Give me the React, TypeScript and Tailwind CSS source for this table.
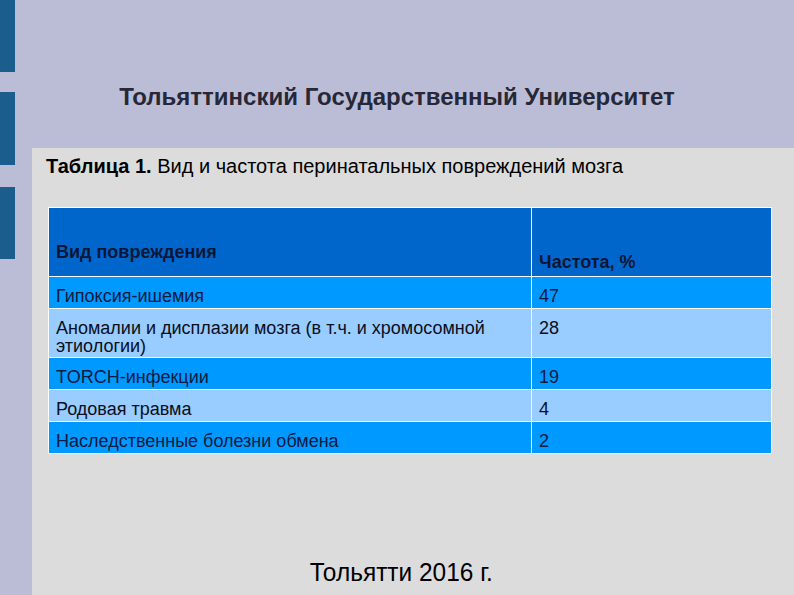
import React from "react";

const rows: { name: React.ReactNode; value: string; tall?: boolean; light: boolean }[] = [
  { name: "Гипоксия-ишемия", value: "47", light: false },
  {
    name: (
      <>
        Аномалии и дисплазии мозга (в т.ч. и хромосомной
        <br />
        этиологии)
      </>
    ),
    value: "28",
    tall: true,
    light: true,
  },
  { name: "TORCH-инфекции", value: "19", light: false },
  { name: "Родовая травма", value: "4", light: true },
  { name: "Наследственные болезни обмена", value: "2", light: false },
];

export default function App() {
  return (
    <div
      className="flex h-[595px] w-[794px] overflow-hidden bg-[#bbbdd7]"
      style={{ fontFamily: '"Liberation Sans", Arial, sans-serif' }}
    >
      {/* left decorative bars */}
      <div className="flex w-[32px] shrink-0 flex-col">
        <div className="h-[72px] w-[15px] bg-[#1b5d8d]" />
        <div className="mt-[20px] h-[73px] w-[15px] bg-[#1b5d8d]" />
        <div className="mt-[22px] h-[72px] w-[15px] bg-[#1b5d8d]" />
      </div>

      <div className="flex flex-1 flex-col">
        <div className="flex h-[148px] items-center justify-center pr-[32px] pt-[46px]">
          <h1 className="text-[24px] font-bold text-[#262838]">
            Тольяттинский Государственный Университет
          </h1>
        </div>

        <div className="flex flex-1 flex-col bg-[#dcdcdc] pl-[14px]">
          <p className="mt-[6px] text-[20px] leading-[24px] text-black">
            <span className="font-bold">Таблица 1.</span> Вид и частота перинатальных повреждений мозга
          </p>

          <div className="ml-[2px] mt-[29px] w-[724px] bg-white p-px">
            <div className="grid grid-cols-[482px_1fr] gap-px">
              <div className="h-[68px] bg-[#0066cc] px-[7px] pt-[35px] text-[18px] font-bold leading-[18px] text-[#0b1636]">
                Вид повреждения
              </div>
              <div className="h-[68px] bg-[#0066cc] px-[7px] pt-[45px] text-[18px] font-bold leading-[18px] text-[#0b1636]">
                Частота, %
              </div>
              {rows.map((r, i) => (
                <React.Fragment key={i}>
                  <div
                    className={`${r.tall ? "h-[48px] pt-[10px]" : "h-[31px] pt-[10px]"} ${
                      r.light ? "bg-[#99ccff] text-[#0a0f20]" : "bg-[#0099ff] text-[#0b1a40]"
                    } px-[7px] text-[18px] leading-[18px]`}
                  >
                    {r.name}
                  </div>
                  <div
                    className={`${r.tall ? "h-[48px] pt-[10px]" : "h-[31px] pt-[10px]"} ${
                      r.light ? "bg-[#99ccff] text-[#0a0f20]" : "bg-[#0099ff] text-[#0b1a40]"
                    } px-[7px] text-[18px] leading-[18px]`}
                  >
                    {r.value}
                  </div>
                </React.Fragment>
              ))}
            </div>
          </div>

          <div className="mt-auto flex justify-center pb-[8px] pr-[38px]">
            <span className="inline-block origin-center scale-x-[0.94] text-[26px] leading-[30px] text-black">
              Тольятти 2016 г.
            </span>
          </div>
        </div>
      </div>
    </div>
  );
}
